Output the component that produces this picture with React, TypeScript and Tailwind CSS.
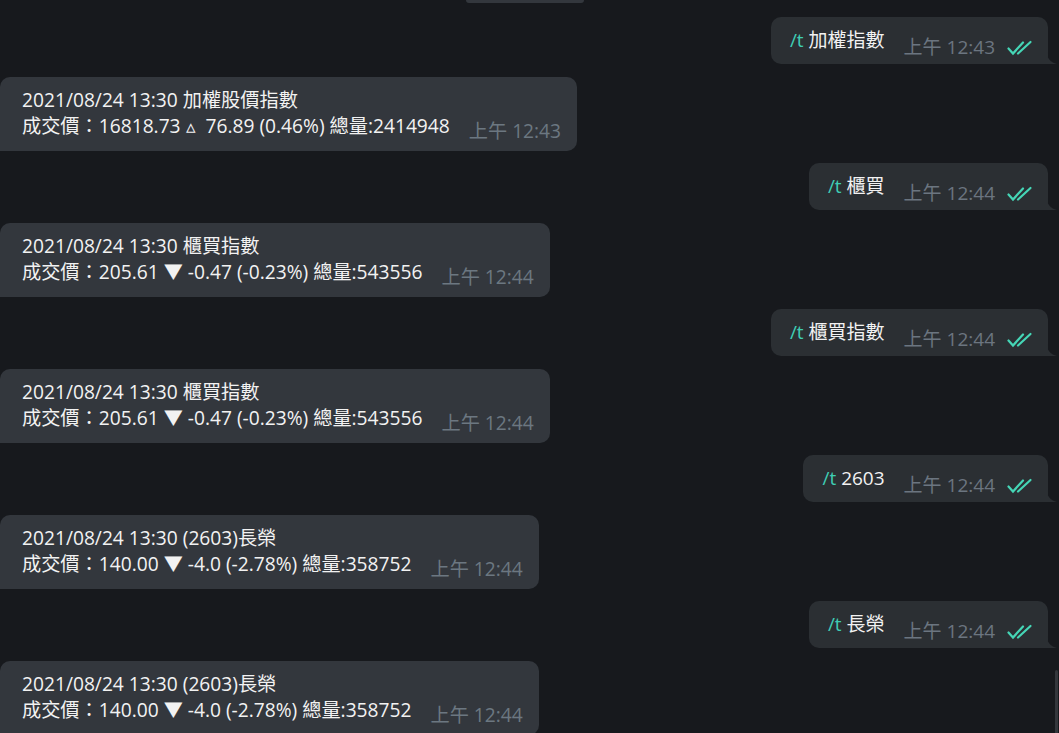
import React from 'react';

interface OutMsg {
  key: string;
  text: string;
  time: string;
}

interface InMsg {
  key: string;
  title: string;
  line: string;
  time: string;
}

const rows: { out: OutMsg; reply: InMsg }[] = [
  {
    out: { key: 'o1', text: '加權指數', time: '上午 12:43' },
    reply: {
      key: 'i1',
      title: '2021/08/24 13:30 加權股價指數',
      line: '成交價：16818.73 ▵  76.89 (0.46%) 總量:2414948',
      time: '上午 12:43',
    },
  },
  {
    out: { key: 'o2', text: '櫃買', time: '上午 12:44' },
    reply: {
      key: 'i2',
      title: '2021/08/24 13:30 櫃買指數',
      line: '成交價：205.61 ▼ -0.47 (-0.23%) 總量:543556',
      time: '上午 12:44',
    },
  },
  {
    out: { key: 'o3', text: '櫃買指數', time: '上午 12:44' },
    reply: {
      key: 'i3',
      title: '2021/08/24 13:30 櫃買指數',
      line: '成交價：205.61 ▼ -0.47 (-0.23%) 總量:543556',
      time: '上午 12:44',
    },
  },
  {
    out: { key: 'o4', text: '2603', time: '上午 12:44' },
    reply: {
      key: 'i4',
      title: '2021/08/24 13:30 (2603)長榮',
      line: '成交價：140.00 ▼ -4.0 (-2.78%) 總量:358752',
      time: '上午 12:44',
    },
  },
  {
    out: { key: 'o5', text: '長榮', time: '上午 12:44' },
    reply: {
      key: 'i5',
      title: '2021/08/24 13:30 (2603)長榮',
      line: '成交價：140.00 ▼ -4.0 (-2.78%) 總量:358752',
      time: '上午 12:44',
    },
  },
];

// double tick, telegram style
function Ticks() {
  return (
    <svg width="28" height="16" viewBox="0 0 28 16" className="ml-[12px] mb-[8px] shrink-0">
      <path d="M1.5 8.5 L6 13.5 L16 2.5" stroke="#45d6b6" strokeWidth="2.2" fill="none" strokeLinecap="round" />
      <path d="M11 13.5 L23.5 2" stroke="#45d6b6" strokeWidth="2.2" fill="none" strokeLinecap="round" />
    </svg>
  );
}

function Outgoing({ msg }: { msg: OutMsg }) {
  return (
    <div className="flex justify-end pr-[11px]">
      <div className="relative flex items-end h-[47px] bg-[#2b2f33] rounded-[10px] rounded-br-none pl-[19px] pr-[13px]">
        <span className="text-[19px] leading-[26px] text-[#f2f2f2] mb-[11px]">
          <span className="text-[#3fcdb3]">/t</span> {msg.text}
        </span>
        <span className="ml-[19px] text-[19px] leading-[22px] text-[#6b7580] mb-[6px]">{msg.time}</span>
        <Ticks />
        <svg width="10" height="12" viewBox="0 0 10 12" className="absolute -right-[9px] bottom-0">
          <path d="M0 0 C0 6 3 10 10 12 L0 12 Z" fill="#2b2f33" />
        </svg>
      </div>
    </div>
  );
}

function Incoming({ msg }: { msg: InMsg }) {
  return (
    <div className="flex justify-start">
      <div className="flex items-end bg-[#33373d] rounded-[10px] rounded-bl-none pl-[22px] pr-[16px] pt-[10px] pb-[9px]">
        <div className="text-[19.2px] leading-[26px] text-[#f2f2f2] mb-[3px] whitespace-pre">
          <div>{msg.title}</div>
          <div>{msg.line}</div>
        </div>
        <span className="ml-[19px] text-[19.2px] leading-[22px] text-[#6c7781]">{msg.time}</span>
      </div>
    </div>
  );
}

export default function App() {
  return (
    <main
      className="relative h-[733px] w-[1059px] overflow-hidden bg-[#17191d]"
      style={{ fontFamily: '"Open Sans", "Noto Sans CJK TC", sans-serif' }}
    >
      {/* tail end of a bubble cut by the top edge */}
      <div className="flex justify-start pl-[466px]">
        <div className="w-[118px] h-[3px] bg-[#33373d] rounded-b-[8px]" />
      </div>

      <div className="flex flex-col pt-[14px]">
        {rows.map((r) => (
          <div key={r.out.key} className="flex flex-col gap-[13px] mb-[12px]">
            <Outgoing msg={r.out} />
            <Incoming msg={r.reply} />
          </div>
        ))}
      </div>

      {/* scrollbar */}
      <div className="absolute right-[1px] top-[670px] h-[80px] w-[3px] rounded-full bg-[#34373c]" />
    </main>
  );
}
